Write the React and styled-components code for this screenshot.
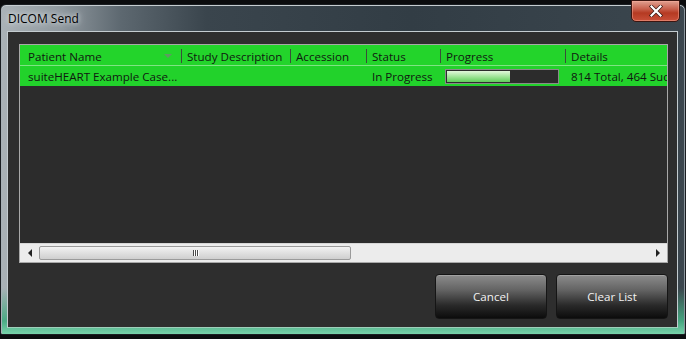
import React from "react";
import styled, { createGlobalStyle } from "styled-components";

const Global = createGlobalStyle`
  html, body { margin: 0; padding: 0; background: #0b0c0e; }
  body { width: 686px; height: 339px; overflow: hidden; font-family: "Open Sans", "Liberation Sans", sans-serif; }
`;

const Screen = styled.div`
  width: 686px;
  height: 339px;
  padding-top: 4px;
  box-sizing: border-box;
  position: relative;
`;

const Window = styled.div`
  width: 686px;
  height: 331px;
  box-sizing: border-box;
  border-radius: 6px 6px 2px 2px;
  border: 1px solid #1a1e22;
  background:
    linear-gradient(180deg, rgba(0,0,0,0) 0%, rgba(0,0,0,0) 86%, rgba(70,170,130,0.95) 96%, rgba(120,210,170,1) 100%),
    linear-gradient(90deg, #aab2b7 0px, #8f989e 60px, #5d6870 120px, #3a454d 30%, #323d45 60%, #3b464e 100%);
  box-shadow: inset 0 1px 0 #c6cdd1, inset 1px 0 0 #a7b0b6, inset -1px 0 0 #8d979e;
  display: flex;
  flex-direction: column;
  padding: 0 7px 6px 6px;
`;

const TitleBar = styled.div`
  height: 26px;
  display: flex;
  align-items: center;
  position: relative;
`;

const Title = styled.div`
  font-size: 12px;
  color: #000000;
  padding-left: 1px;
  margin-top: 1px;
  text-shadow: 0 0 8px rgba(235,240,242,0.9), 0 0 4px rgba(235,240,242,0.8);
`;

const CloseButton = styled.div`
  position: absolute;
  right: -2px;
  top: -5px;
  width: 47px;
  height: 20px;
  border-radius: 0 0 5px 5px;
  border: 1px solid #3b1510;
  box-shadow: inset 0 0 0 1px rgba(255,180,160,0.45);
  background: linear-gradient(180deg, #e0a090 0%, #c8604c 40%, #b53a22 60%, #c9503a 100%);
  display: flex;
  align-items: center;
  justify-content: center;
`;

const Client = styled.div`
  flex: 1;
  background: #2e2e2e;
  border: 1px solid #c4ccd0;
  border-bottom-color: #9ecfba;
  display: flex;
  flex-direction: column;
  padding: 12px 9px 7px 11px;
  gap: 11px;
`;

const List = styled.div`
  height: 219px;
  box-sizing: border-box;
  border: 1px solid #a8a8a8;
  background: #2c2c2c;
  display: flex;
  flex-direction: column;
  overflow: hidden;
`;

const Rows = styled.div`
  flex: 1;
  overflow: hidden;
`;

const cols = [161, 109, 76, 74, 125, 110];

const HeaderRow = styled.div`
  display: flex;
  height: 21px;
  background: #23d42b;
  border-bottom: 1px solid #7fe383;
  box-sizing: border-box;
  white-space: nowrap;
`;

const HeaderCell = styled.div`
  width: ${(p) => p.$w}px;
  flex: none;
  position: relative;
  box-sizing: border-box;
  padding: 2px 0 0 ${(p) => (p.$first ? 8 : 6)}px;
  font-size: 11.6px;
  line-height: 19px;
  color: #101810;
  ${(p) =>
    p.$first
      ? ""
      : `&::after {
    content: "";
    position: absolute;
    left: 0;
    top: 4px;
    height: 14px;
    width: 1px;
    background: #3a4e3a;
  }`}
`;

const SortArrow = styled.span`
  position: absolute;
  right: 9px;
  top: 9px;
  width: 0;
  height: 0;
  border-left: 4px solid transparent;
  border-right: 4px solid transparent;
  border-top: 4px solid #5f9a62;
`;

const DataRow = styled.div`
  display: flex;
  height: 20px;
  background: #22d22b;
  white-space: nowrap;
`;

const DataCell = styled.div`
  width: ${(p) => p.$w}px;
  flex: none;
  box-sizing: border-box;
  padding: 1px 0 0 ${(p) => (p.$first ? 8 : 6)}px;
  font-size: 11.6px;
  line-height: 19px;
  color: #101810;
  overflow: hidden;
  display: flex;
  align-items: center;
`;

const ProgressTrack = styled.div`
  width: 114px;
  height: 15px;
  box-sizing: border-box;
  border: 1px solid #8a8a8a;
  background: #2c2c2c;
  margin: -1px 0 0 -1px;
  padding: 1px;
`;

const ProgressFill = styled.div`
  height: 100%;
  background: linear-gradient(180deg, #e2f7dc 0%, #a7e7a0 45%, #5fcd5a 100%);
`;

const ScrollBar = styled.div`
  height: 18px;
  background: #ececec;
  display: flex;
  align-items: center;
  border-top: 1px solid #d6d6d6;
`;

const ArrowBox = styled.div`
  width: 19px;
  height: 17px;
  display: flex;
  align-items: center;
  justify-content: center;
  flex: none;
`;

const Thumb = styled.div`
  width: 312px;
  height: 14px;
  box-sizing: border-box;
  border: 1px solid #9a9a9a;
  border-radius: 2px;
  background: linear-gradient(180deg, #f2f2f2 0%, #e0e0e0 50%, #cfcfcf 100%);
  display: flex;
  align-items: center;
  justify-content: center;
  gap: 1px;
`;

const Grip = styled.span`
  width: 1px;
  height: 6px;
  background: #4a4a4a;
  box-shadow: 1px 0 0 #ffffff;
`;

const Spacer = styled.div`
  flex: 1;
`;

const Buttons = styled.div`
  display: flex;
  justify-content: flex-end;
  gap: 9px;
`;

const Button = styled.div`
  width: 112px;
  height: 45px;
  box-sizing: border-box;
  border: 1px solid #151515;
  border-radius: 4px;
  background: linear-gradient(180deg, #8c8c8c 0%, #636363 35%, #2a2a2a 70%, #0c0c0c 100%);
  box-shadow: inset 0 1px 0 rgba(255,255,255,0.2);
  color: #f2f2f2;
  font-size: 11.6px;
  display: flex;
  align-items: center;
  justify-content: center;
`;

const Header = ({ children, i, arrow }) => (
  <HeaderCell $w={cols[i]} $first={i === 0}>
    {children}
    {arrow && <SortArrow />}
  </HeaderCell>
);

export default function App() {
  const progress = 464 / 814;
  return (
    <>
      <Global />
      <Screen>
        <Window>
          <TitleBar>
            <Title>DICOM Send</Title>
            <CloseButton>
              <svg width="16" height="12" viewBox="0 0 16 12">
                <path d="M3.5 1.5 L12.5 10.5 M12.5 1.5 L3.5 10.5" stroke="#3a1a14" strokeWidth="3.6" strokeLinecap="square" />
                <path d="M3.5 1.5 L12.5 10.5 M12.5 1.5 L3.5 10.5" stroke="#ffffff" strokeWidth="2.2" strokeLinecap="square" />
              </svg>
            </CloseButton>
          </TitleBar>
          <Client>
            <List>
              <Rows>
                <HeaderRow>
                  <Header i={0} arrow>Patient Name</Header>
                  <Header i={1}>Study Description</Header>
                  <Header i={2}>Accession</Header>
                  <Header i={3}>Status</Header>
                  <Header i={4}>Progress</Header>
                  <Header i={5}>Details</Header>
                </HeaderRow>
                <DataRow>
                  <DataCell $w={cols[0]} $first>suiteHEART Example Case...</DataCell>
                  <DataCell $w={cols[1]} />
                  <DataCell $w={cols[2]} />
                  <DataCell $w={cols[3]}>In Progress</DataCell>
                  <DataCell $w={cols[4]}>
                    <ProgressTrack>
                      <ProgressFill style={{ width: `${progress * 100}%` }} />
                    </ProgressTrack>
                  </DataCell>
                  <DataCell $w={cols[5]}>814 Total, 464 Succeeded</DataCell>
                </DataRow>
              </Rows>
              <ScrollBar>
                <ArrowBox>
                  <svg width="6" height="8" viewBox="0 0 6 8"><path d="M5 0 L1 4 L5 8 Z" fill="#222" /></svg>
                </ArrowBox>
                <Thumb>
                  <Grip /><Grip /><Grip />
                </Thumb>
                <Spacer />
                <ArrowBox>
                  <svg width="6" height="8" viewBox="0 0 6 8"><path d="M1 0 L5 4 L1 8 Z" fill="#222" /></svg>
                </ArrowBox>
              </ScrollBar>
            </List>
            <Buttons>
              <Button>Cancel</Button>
              <Button>Clear List</Button>
            </Buttons>
          </Client>
        </Window>
      </Screen>
    </>
  );
}
